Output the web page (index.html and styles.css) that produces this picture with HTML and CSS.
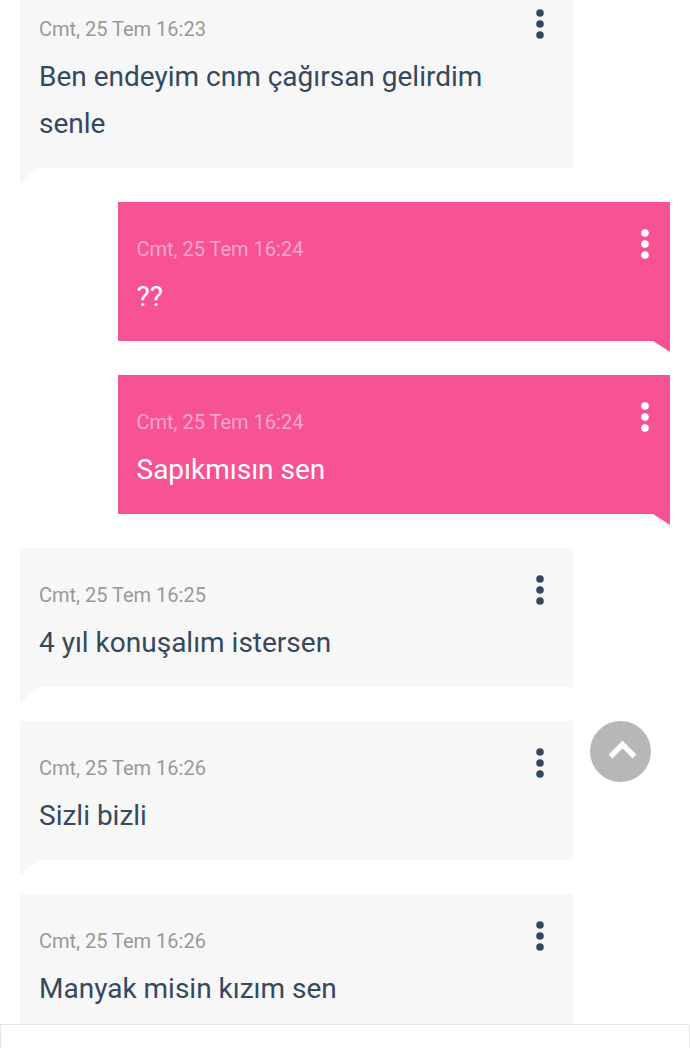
FILE: index.html
```html
<!DOCTYPE html>
<html lang="tr">
<head>
    <meta charset="UTF-8">
    <meta name="viewport" content="width=device-width, initial-scale=1.0">
    <title>Mesajlar</title>
    <link rel="stylesheet" href="styles.css">
</head>
<body>

    <!-- Mesaj listesi -->
    <main class="messages">
        <div class="message-list">
            <article class="message received">
                <time class="message-time">Cmt, 25 Tem 16:23</time>
                <p class="message-text">Ben endeyim cnm çağırsan gelirdim senle</p>
                <button class="menu-btn" aria-label="Seçenekler">
                    <svg width="8" height="30" viewBox="0 0 8 30" fill="currentColor">
                        <circle cx="4" cy="4" r="3.8"></circle>
                        <circle cx="4" cy="15" r="3.8"></circle>
                        <circle cx="4" cy="26" r="3.8"></circle>
                    </svg>
                </button>
            </article>

            <article class="message sent">
                <time class="message-time">Cmt, 25 Tem 16:24</time>
                <p class="message-text">??</p>
                <button class="menu-btn" aria-label="Seçenekler">
                    <svg width="8" height="30" viewBox="0 0 8 30" fill="currentColor">
                        <circle cx="4" cy="4" r="3.8"></circle>
                        <circle cx="4" cy="15" r="3.8"></circle>
                        <circle cx="4" cy="26" r="3.8"></circle>
                    </svg>
                </button>
            </article>

            <article class="message sent">
                <time class="message-time">Cmt, 25 Tem 16:24</time>
                <p class="message-text">Sapıkmısın sen</p>
                <button class="menu-btn" aria-label="Seçenekler">
                    <svg width="8" height="30" viewBox="0 0 8 30" fill="currentColor">
                        <circle cx="4" cy="4" r="3.8"></circle>
                        <circle cx="4" cy="15" r="3.8"></circle>
                        <circle cx="4" cy="26" r="3.8"></circle>
                    </svg>
                </button>
            </article>

            <article class="message received">
                <time class="message-time">Cmt, 25 Tem 16:25</time>
                <p class="message-text">4 yıl konuşalım istersen</p>
                <button class="menu-btn" aria-label="Seçenekler">
                    <svg width="8" height="30" viewBox="0 0 8 30" fill="currentColor">
                        <circle cx="4" cy="4" r="3.8"></circle>
                        <circle cx="4" cy="15" r="3.8"></circle>
                        <circle cx="4" cy="26" r="3.8"></circle>
                    </svg>
                </button>
            </article>

            <article class="message received">
                <time class="message-time">Cmt, 25 Tem 16:26</time>
                <p class="message-text">Sizli bizli</p>
                <button class="menu-btn" aria-label="Seçenekler">
                    <svg width="8" height="30" viewBox="0 0 8 30" fill="currentColor">
                        <circle cx="4" cy="4" r="3.8"></circle>
                        <circle cx="4" cy="15" r="3.8"></circle>
                        <circle cx="4" cy="26" r="3.8"></circle>
                    </svg>
                </button>
            </article>

            <article class="message received">
                <time class="message-time">Cmt, 25 Tem 16:26</time>
                <p class="message-text">Manyak misin kızım sen</p>
                <button class="menu-btn" aria-label="Seçenekler">
                    <svg width="8" height="30" viewBox="0 0 8 30" fill="currentColor">
                        <circle cx="4" cy="4" r="3.8"></circle>
                        <circle cx="4" cy="15" r="3.8"></circle>
                        <circle cx="4" cy="26" r="3.8"></circle>
                    </svg>
                </button>
            </article>
        </div>
    </main>

    <!-- Mesaj yazma alanı -->
    <footer class="composer">
        <input class="composer-input" type="text" aria-label="Mesaj yaz">
    </footer>

    <!-- Yukarı çık butonu -->
    <button class="scroll-top" aria-label="Yukarı çık">
        <svg width="61" height="61" viewBox="0 0 61 61" fill="none" stroke="#fff" stroke-width="5.4">
            <path d="M20.5 35.5L32.5 23.5L44.5 35.5"></path>
        </svg>
    </button>

</body>
</html>
```
FILE: styles.css
```css
* {
    margin: 0;
    padding: 0;
    box-sizing: border-box;
    font-family: Roboto, sans-serif;
}

body {
    height: 100vh;
    display: flex;
    flex-direction: column;
    background: #fff;
}

/* Mesaj listesi */
.messages {
    flex: 1;
    min-height: 0;
    overflow: hidden;
}

.message-list {
    display: flex;
    flex-direction: column;
    gap: 34px;
    margin-top: -18px;
    padding: 0 20px;
}

/* Mesaj balonu */
.message {
    position: relative;
    width: 85%;
    padding: 24px 19px 21px;
}

.message.received {
    align-self: flex-start;
    background: #f7f7f7;
    color: #34495e;
}

.message.sent {
    align-self: flex-end;
    background: #f75293;
    color: #fff;
}

/* Balonun kuyruğu */
.message::after {
    content: "";
    position: absolute;
    top: 100%;
    width: 17px;
    background: inherit;
}

.message.received::after {
    left: 0;
    height: 16px;
    clip-path: polygon(0 0, 100% 0, 0 100%);
}

.message.sent::after {
    right: 0;
    height: 11px;
    clip-path: polygon(0 0, 100% 0, 100% 100%);
}

.message-time {
    display: block;
    font-size: 20px;
    line-height: 47px;
    color: #999;
}

.message.sent .message-time {
    color: #fba8c9;
}

.message-text {
    font-size: 28px;
    line-height: 47px;
}

.menu-btn {
    position: absolute;
    top: 27px;
    right: 21px;
    width: 24px;
    height: 30px;
    border: none;
    background: none;
    color: inherit;
    cursor: pointer;
}

.sent .menu-btn {
    right: 13px;
}

.menu-btn svg {
    display: block;
    margin: 0 auto;
}

/* Mesaj yazma alanı */
.composer {
    height: 24px;
    overflow: hidden;
}

.composer-input {
    display: block;
    width: 100%;
    height: 48px;
    padding: 0 19px;
    border: 1px solid #e6e6e6;
    background: #fff;
    font-size: 20px;
    outline: none;
}

/* Yukarı çık butonu */
.scroll-top {
    position: fixed;
    right: 39px;
    bottom: 266px;
    width: 61px;
    height: 61px;
    border: none;
    border-radius: 50%;
    background: #b7b7b7;
    cursor: pointer;
}

.scroll-top svg {
    display: block;
}
```
